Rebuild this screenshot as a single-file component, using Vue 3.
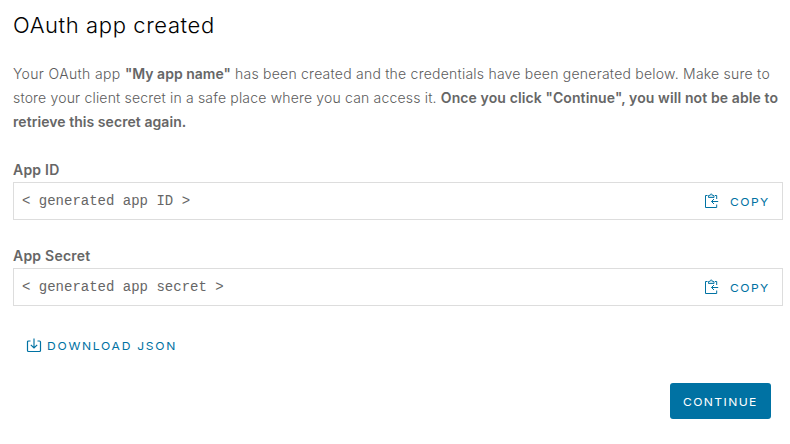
<script setup>
const fields = [
  { label: 'App ID', value: '< generated app ID >', key: 'id' },
  { label: 'App Secret', value: '< generated app secret >', key: 'secret' },
]
</script>

<template>
  <main class="dialog">
    <h1>OAuth app created</h1>
    <p class="message">
      <span class="line"><span class="intro">Your OAuth app </span><b class="name">"My app name"</b><span class="created"> has been created and the credentials have been generated below. Make sure to</span></span>
      <span class="line"><span class="store">store your client secret in a safe place where you can access it. </span><b class="warning">Once you click "Continue", you will not be able to</b></span>
      <span class="line"><b class="ending">retrieve this secret again.</b></span>
    </p>
    <section v-for="field in fields" :key="field.key" class="field">
      <label>{{ field.label }}</label>
      <div class="box">
        <code>{{ field.value }}</code>
        <button class="copy">
          <svg width="16" height="16" viewBox="0 0 16 16" fill="none" stroke="currentColor">
            <path d="M3.500 2.500h-2v12h11.200V11.500M11 2.500h1.700V6" />
            <path d="M4.500 4.500V2.500h1.300Q6 1 7.200 1t1.400 1.500H10v2z" fill="#0072a333" stroke-width=".9" />
            <path d="M14.200 8.500H7.700M10 6 7.500 8.500 10 11" />
          </svg>
          <span>COPY</span>
        </button>
      </div>
    </section>
    <button class="download">
      <svg width="16" height="16" viewBox="0 0 16 16" fill="none" stroke="currentColor">
        <path d="M4.500 3H2.500q-1 0-1 1v8.500q0 1 1 1h11q1 0 1-1V4q0-1-1-1h-2" stroke-width="1.200" />
        <path d="M8 .5V9.500M4.800 6.800 8 10l3.200-3.200" stroke-width="1.150" />
      </svg>
      <span>DOWNLOAD JSON</span>
    </button>
    <footer><button class="continue"><span>CONTINUE</span></button></footer>
  </main>
</template>

<style>
body { margin: 0; background: #fff; }
</style>

<style scoped>
.dialog {
  box-sizing: border-box;
  width: 790px;
  height: 444px;
  padding: 12px 7px 0 13px;
  color: #666;
  font: 350 14px/24px Inter, sans-serif;
  overflow: hidden;
}
h1 { margin: 0; font-size: 22px; line-height: 26px; font-weight: 300; letter-spacing: 0.6px; color: #000; }
.message { margin: 24px 0 0; color: #5c5c5c; }
.message b { color: #666; }
.line { display: block; white-space: pre; }
.intro { letter-spacing: 0.36px; }
.name { letter-spacing: 0.02px; }
.created { letter-spacing: 0.23px; }
.store { letter-spacing: 0.18px; }
.warning { letter-spacing: 0.11px; }
.ending { letter-spacing: 0.06px; }
b, label { font-weight: 600; }
.field { margin-top: 24px; }
label { display: block; height: 24px; line-height: 24px; letter-spacing: 0.22px; }
.box {
  box-sizing: border-box;
  height: 38px;
  border: 1px solid #ddd;
  display: flex;
  align-items: center;
  justify-content: space-between;
  padding: 0 13px 0 8px;
}
code { font: 14px/24px "Liberation Mono", monospace; white-space: pre; }
button {
  display: flex;
  align-items: center;
  border: 0;
  padding: 0;
  margin: 0;
  background: none;
  color: #0072a3;
  font: 400 11px/16px Inter, sans-serif;
  text-align: left;
}
button span { transform: scaleX(1.1); transform-origin: left center; white-space: nowrap; }
.copy { gap: 10px; letter-spacing: 1.3px; }
.copy span { width: 39px; padding-top: 2px; }
.download { margin: 32px 0 0 13px; gap: 5px; letter-spacing: 1.55px; }
footer { display: flex; justify-content: flex-end; margin: 29px 12px 0 0; }
.continue {
  width: 101px;
  height: 36px;
  padding: 2px 0 0 13px;
  background: #0072a3;
  color: #fff;
  border-radius: 3px;
  letter-spacing: 1.25px;
}
</style>
